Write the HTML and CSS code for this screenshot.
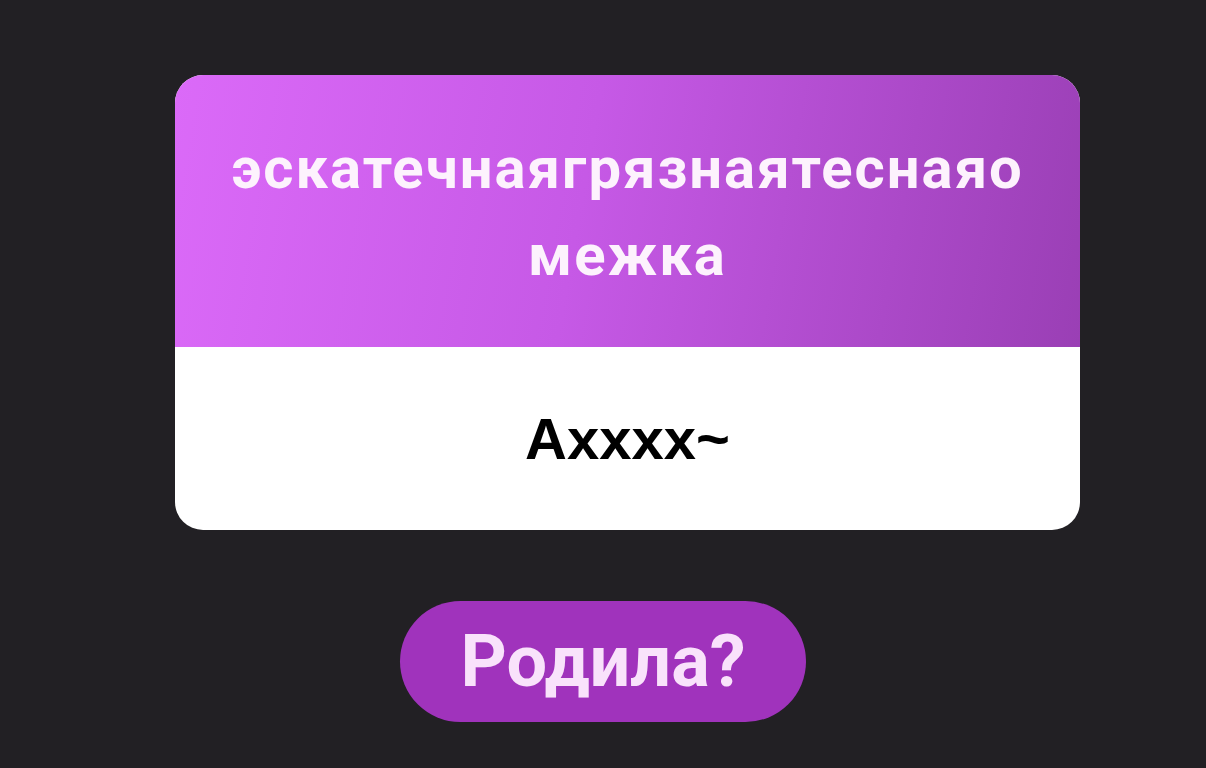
FILE: index.html
```html
<!DOCTYPE html>
<html lang="ru">
<head>
    <meta charset="UTF-8">
    <meta name="viewport" content="width=device-width, initial-scale=1.0">
    <link rel="stylesheet" href="styles.css">
    <title>Карточка</title>
</head>
<body>
    <div class="page">
        <div class="card">
            <div class="card-head">
                <h1 class="card-title">эскатечнаягрязнаятеснаяо межка</h1>
            </div>
            <div class="card-body">
                <p class="card-text">Axxxx~</p>
            </div>
        </div>

        <button class="action-button" type="button">Родила?</button>
    </div>
</body>
</html>
```

FILE: styles.css
```css
html,
body {
    margin: 0;
    padding: 0;
    height: 100%;
}

body {
    background-color: #222024;
    font-family: Roboto, "Noto Sans", sans-serif;
}

.page {
    display: flex;
    flex-direction: column;
    align-items: center;
    padding-top: 75px;
}

.card {
    width: 905px;
    margin-left: 49px;
    border-radius: 28px;
    overflow: hidden;
    background-color: #fff;
}

.card-head {
    height: 272px;
    display: flex;
    align-items: center;
    justify-content: center;
    background: linear-gradient(100deg, #db6af8 0%, #c659e6 45%, #9a3fb5 100%);
}

.card-title {
    margin: 0;
    padding-top: 2px;
    width: 860px;
    text-align: center;
    color: #fdf2fd;
    font-family: Roboto, "Noto Sans", sans-serif;
    font-weight: 700;
    font-size: 58px;
    line-height: 87px;
    letter-spacing: 2px;
}

.card-body {
    height: 183px;
    display: flex;
    align-items: center;
    justify-content: center;
}

.card-text {
    margin: 0;
    color: #000;
    font-family: "Liberation Sans", Arial, sans-serif;
    font-weight: 700;
    font-size: 58px;
}

.action-button {
    margin-top: 71px;
    width: 406px;
    height: 121px;
    border: none;
    border-radius: 61px;
    background-color: #a033bc;
    color: #f9e2fb;
    font-family: Roboto, "Noto Sans", sans-serif;
    font-weight: 700;
    font-size: 72px;
    cursor: pointer;
}

.action-button:hover {
    background-color: #9329ae;
}
```
